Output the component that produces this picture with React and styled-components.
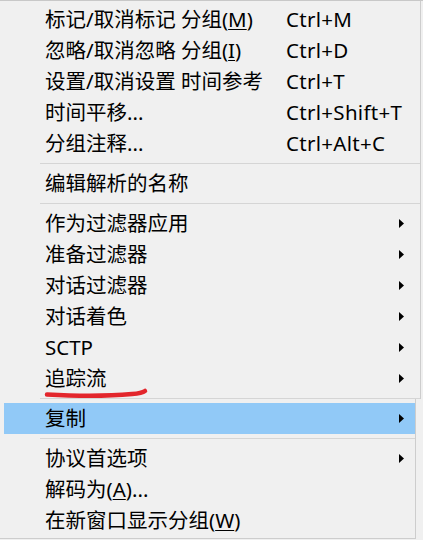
import React from "react";
import styled, { createGlobalStyle } from "styled-components";

const GlobalStyle = createGlobalStyle`
  html, body {
    margin: 0;
    padding: 0;
    background: #f0f0f0;
  }
  body {
    font-family: "Noto Sans", "Noto Sans CJK SC", sans-serif;
    color: #000;
  }
`;

const Menu = styled.div`
  position: relative;
  width: 423px;
  height: 540px;
  overflow: hidden;
  background: #f0f0f0;
  border-top: 1px solid #c8c8c8;
  box-sizing: border-box;
  font-size: 20.5px;
`;

const Section = styled.div`
  width: ${(p) => p.$width}px;
  box-sizing: border-box;
  border-right: 1px solid #cdcdcd;
  border-bottom: ${(p) => (p.$bottom ? "1px solid #cdcdcd" : "none")};
  padding-top: ${(p) => (p.$bottom ? 4 : 3)}px;
  padding-bottom: ${(p) => (p.$bottom ? 2 : 0)}px;
  background: #f0f0f0;
`;

const Row = styled.div`
  display: grid;
  grid-template-columns: 241px 1fr 6px;
  align-items: center;
  height: 31px;
  margin-left: ${(p) => (p.$active ? 4 : 0)}px;
  padding-left: ${(p) => (p.$active ? 41 : 45)}px;
  padding-right: ${(p) => p.$right}px;
  background: ${(p) => (p.$active ? "#91c9f7" : "transparent")};
  white-space: nowrap;
  line-height: 31px;
`;

const Label = styled.span`
  display: block;
`;

const Shortcut = styled.span`
  display: block;
  letter-spacing: 0.3px;
`;

const Key = styled.u`
  text-decoration: underline;
  text-underline-offset: 2px;
  text-decoration-thickness: 1px;
`;

const Separator = styled.div`
  height: ${(p) => p.$h || 9}px;
  padding-top: 4px;
  box-sizing: border-box;

  &::after {
    content: "";
    display: block;
    height: 1px;
    margin-left: 40px;
    background: #d5d5d5;
  }
`;

const Arrow = () => (
  <svg width="5" height="9" viewBox="0 0 5 9">
    <polygon points="0,0 5,4.5 0,9" fill="#000" />
  </svg>
);

const Scribble = styled.svg`
  position: absolute;
  left: 0;
  top: 0;
  pointer-events: none;
`;

const topItems = [
  { label: <>标记/取消标记 分组(<Key>M</Key>)</>, key: "Ctrl+M" },
  { label: <>忽略/取消忽略 分组(<Key>I</Key>)</>, key: "Ctrl+D" },
  { label: "设置/取消设置 时间参考", key: "Ctrl+T" },
  { label: "时间平移...", key: "Ctrl+Shift+T" },
  { label: "分组注释...", key: "Ctrl+Alt+C" },
  { sep: true },
  { label: "编辑解析的名称" },
  { sep: true },
  { label: "作为过滤器应用", sub: true },
  { label: "准备过滤器", sub: true },
  { label: "对话过滤器", sub: true },
  { label: "对话着色", sub: true },
  { label: "SCTP", sub: true },
  { label: "追踪流", sub: true },
];

const bottomItems = [
  { label: "复制", sub: true, active: true },
  { sep: true },
  { label: "协议首选项", sub: true },
  { label: <>解码为(<Key>A</Key>)...</> },
  { label: <>在新窗口显示分组(<Key>W</Key>)</> },
];

const renderItems = (items, right) =>
  items.map((it, i) =>
    it.sep ? (
      <Separator key={i} />
    ) : (
      <Row key={i} $right={right} $active={it.active}>
        <Label>{it.label}</Label>
        <Shortcut>{it.key}</Shortcut>
        {it.sub ? <Arrow /> : <span />}
      </Row>
    )
  );

export default function App() {
  return (
    <>
      <GlobalStyle />
      <Menu>
        <Section $width={421}>
          {renderItems(topItems, 15)}
          <Separator $h={5} />
        </Section>
        <Section $width={416} $bottom>
          {renderItems(bottomItems, 10)}
        </Section>
        <Scribble width="423" height="540">
          <path
            d="M47 393.5 C 75 395, 110 395, 132 393 C 139 392.5, 143 391.5, 145 390"
            fill="none"
            stroke="#e3262c"
            strokeWidth="4.5"
            strokeLinecap="round"
          />
        </Scribble>
      </Menu>
    </>
  );
}
